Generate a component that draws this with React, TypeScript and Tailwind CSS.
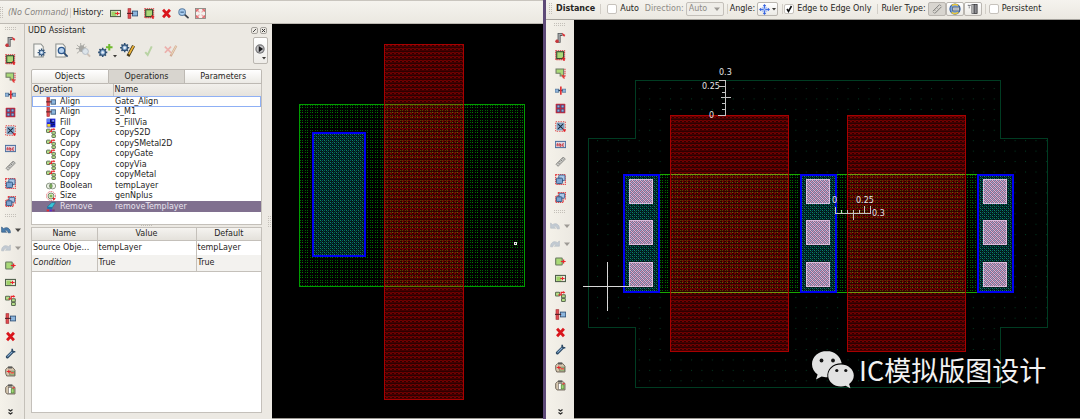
import React, { useState } from 'react';

type IconProps = { className?: string };

function Svg({ className = 'size-[11px]', children }: { className?: string; children: React.ReactNode }) {
  return (
    <svg viewBox="0 0 16 16" className={`shrink-0 ${className}`} fill="none" aria-hidden="true">
      {children}
    </svg>
  );
}

const PathIcon = ({ className }: IconProps) => (
  <Svg className={className}>
    <path d="M2 13.500h4V3.500h5" stroke="#55585a" strokeWidth="4.400" />
    <path d="M3 13.500h3V3.500h4" stroke="#a9adb0" strokeWidth="2" />
    <circle cx="3" cy="13.400" r="2.600" fill="#c8373c" />
    <path d="M10 1l5 3.500-1.500 2.500-2-1.500z" fill="#e03438" />
  </Svg>
);
const RectIcon = ({ className }: IconProps) => (
  <Svg className={className}>
    <rect x="1" y="1" width="13" height="13" stroke="#d8363a" strokeWidth="1.500" strokeDasharray="2 1" />
    <rect x="2.500" y="2.500" width="10" height="10" fill="#a9d977" stroke="#33452a" strokeWidth="1.600" />
    <path d="M10 10l5.500 2-2 1 1 2.500-2 .5z" fill="#e31e24" />
  </Svg>
);
const PolygonIcon = ({ className }: IconProps) => (
  <Svg className={className}>
    <path d="M1.500 1.500h11v10h-5v-4h-6z" fill="#a9d977" stroke="#6d7a63" strokeWidth="1.500" />
    <path d="M14.500 1v12" stroke="#d8363a" strokeWidth="1.500" strokeDasharray="2 1" />
    <path d="M9 9l6.500 3-2 1 1 2.500-3-.5z" fill="#e33a3a" />
  </Svg>
);
const CutIcon = ({ className }: IconProps) => (
  <Svg className={className}>
    <rect x="0" y="6" width="5.500" height="4.500" fill="#8fb6dc" stroke="#4a6d92" />
    <rect x="10.500" y="6" width="5.500" height="4.500" fill="#8fb6dc" stroke="#4a6d92" />
    <path d="M5 8h6" stroke="#233a55" strokeWidth="2" />
    <path d="M8.500 2v12" stroke="#e12f34" strokeWidth="2.400" />
  </Svg>
);
const ArrayIcon = ({ className }: IconProps) => (
  <Svg className={className}>
    <rect x="1" y="1" width="14" height="14" rx="1" fill="#c9283a" />
    {[3, 9].map((y) => [3, 9].map((x) => <rect key={`${x}-${y}`} x={x} y={y} width="4" height="4" fill="#8fb0dc" stroke="#444b80" />))}
  </Svg>
);
const InstanceIcon = ({ className }: IconProps) => (
  <Svg className={className}>
    <rect x="1" y="1" width="14" height="14" stroke="#e04a4e" strokeWidth="1.400" strokeDasharray="2 1.500" />
    <rect x="3" y="3" width="10" height="10" fill="#8fb2d6" stroke="#56779b" />
    <path d="M4.500 4.500l7 7M11.500 4.500l-7 7" stroke="#1c2b3c" strokeWidth="1.600" />
    <path d="M11 11l5 2-3 3z" fill="#e31e24" />
  </Svg>
);
const LabelIcon = ({ className }: IconProps) => (
  <Svg className={className}>
    <rect x=".5" y="3.500" width="15" height="9" fill="#dcd7e2" stroke="#4b6f9e" strokeWidth="1.500" />
    <path d="M3 10.500V7h1.500v3.500M7 6v4.500h1.800V8H7M13 7h-1.800v3.500H13" stroke="#c92a2f" strokeWidth="1.300" />
  </Svg>
);
const RulerIcon = ({ className }: IconProps) => (
  <Svg className={className}>
    <path d="M1.500 12L12 1.500 15 4.500 4.500 15z" fill="#c9c9c6" stroke="#7d7d7a" strokeWidth="1.200" />
    <path d="M4.500 9.500l2 2M6.500 7.500l1.500 1.500M8.500 5.500l2 2M10.500 3.500l1.500 1.500" stroke="#5a5a58" />
  </Svg>
);
const GroupIcon = ({ className }: IconProps) => (
  <Svg className={className}>
    <rect x="1" y="1" width="14" height="14" stroke="#e2444a" strokeWidth="1.700" strokeDasharray="2 1" />
    <rect x="5.500" y="1.500" width="9" height="8" rx="1.500" fill="#a9c7e8" stroke="#3f6695" strokeWidth="1.400" />
    <rect x="2" y="6" width="9" height="8" rx="1.500" fill="#7ba4d2" stroke="#31547f" strokeWidth="1.400" />
  </Svg>
);
const UngroupIcon = ({ className }: IconProps) => (
  <Svg className={className}>
    <path d="M5 1h10v9h-3v5H1V6h4z" stroke="#e2444a" strokeWidth="1.900" strokeDasharray="2 1" />
    <rect x="6" y="2" width="8" height="7" rx="1" fill="#a9c7e8" stroke="#3f6695" strokeWidth="1.400" />
    <rect x="2" y="7" width="8" height="7" rx="1" fill="#7ba4d2" stroke="#31547f" strokeWidth="1.400" />
  </Svg>
);
const undoPath = 'M1 3v8.500h8L6.200 9C8 7.500 10.500 8 11.500 12.500h3.500C15.500 5.500 9 2 4 6z';
const UndoIcon = ({ className }: IconProps) => (
  <Svg className={className}>
    <path d={undoPath} fill="#4c7fae" stroke="#284e77" />
  </Svg>
);
const UndoOffIcon = ({ className }: IconProps) => (
  <Svg className={className}>
    <path d={undoPath} fill="#c3cbd3" stroke="#b2bac2" />
  </Svg>
);
const RedoIcon = ({ className }: IconProps) => (
  <Svg className={className}>
    <path d={undoPath} transform="translate(16 0) scale(-1 1)" fill="#c3cbd3" stroke="#b2bac2" />
  </Svg>
);
const MoveIcon = ({ className }: IconProps) => (
  <Svg className={className}>
    <rect x="1" y="3" width="9.500" height="10" rx="1" fill="#a9d977" stroke="#66775d" strokeWidth="1.600" />
    <path d="M8.500 8H15.500M12.500 5v6" stroke="#e9262c" strokeWidth="1.800" />
  </Svg>
);
const StretchIcon = ({ className }: IconProps) => (
  <Svg className={className}>
    <rect x=".8" y="3.500" width="14.400" height="9" fill="#eef2e8" stroke="#4a5a45" strokeWidth="1.500" />
    <rect x="2" y="5" width="7.500" height="6.500" fill="#9ed067" />
    <path d="M7.500 8H14M11 5.500v5" stroke="#e9262c" strokeWidth="1.600" />
  </Svg>
);
const CopyIcon = ({ className }: IconProps) => (
  <Svg className={className}>
    <rect x=".8" y="1.800" width="6" height="5.400" rx="1" fill="#b5de86" stroke="#5c6c52" strokeWidth="1.500" />
    <rect x="9.500" y="5.500" width="5.500" height="4.500" rx="1" fill="#b5de86" stroke="#5c6c52" strokeWidth="1.500" />
    <rect x="9.500" y="10.800" width="5.500" height="4.400" rx="1" fill="#b5de86" stroke="#5c6c52" strokeWidth="1.500" />
    <path d="M5 5.500h4V2h4" stroke="#e9262c" strokeWidth="1.800" />
    <path d="M12 0l3 2-3 2z" fill="#e9262c" />
  </Svg>
);
const AlignIcon = ({ className }: IconProps) => (
  <Svg className={className}>
    <rect x="1.500" y="1" width="4" height="14" fill="#e24a4f" stroke="#a32f34" />
    <rect x="8" y="4.500" width="7.500" height="7" fill="#8db7de" stroke="#33547a" strokeWidth="1.300" />
    <path d="M0 7.800h9" stroke="#4a1a22" strokeWidth="1.500" />
  </Svg>
);
const DeleteIcon = ({ className }: IconProps) => (
  <Svg className={className}>
    <path d="M3 2.500l10 11M13 2.500l-10 11" stroke="#d9161c" strokeWidth="4" />
  </Svg>
);
const WrenchIcon = ({ className }: IconProps) => (
  <Svg className={className}>
    <path d="M3.500 13L11 5.500" stroke="#2d4a66" strokeWidth="4.400" strokeLinecap="round" />
    <path d="M10.500 1v4.500h4.500" stroke="#2d4a66" strokeWidth="2.400" />
    <path d="M3.500 12.500l7-7" stroke="#8db4d8" strokeWidth="1.500" />
  </Svg>
);
const PasteIcon = ({ className }: IconProps) => (
  <Svg className={className}>
    <path d="M4 2h7l3.500 4v8.500H2.500L1 11V5z" fill="#d6c7ae" stroke="#6e655a" strokeWidth="1.400" />
    <rect x="4.500" y=".6" width="6" height="3" fill="#5a5a58" />
    <rect x="7" y="7.500" width="7" height="5.500" fill="#c5e7a0" stroke="#55664a" />
    <path d="M2.500 8h6M5.500 5.500v5M8 10h5" stroke="#e9262c" strokeWidth="1.500" />
  </Svg>
);
const ClipboardIcon = ({ className }: IconProps) => (
  <Svg className={className}>
    <path d="M4 2h7l3.500 3v9.500H3L1 12V5z" fill="#d6c7ae" stroke="#6e655a" strokeWidth="1.400" />
    <rect x="4.500" y=".6" width="6" height="3" fill="#5a5a58" />
    <rect x="5" y="5" width="5" height="9" fill="#fff" stroke="#77706a" />
    <rect x="9" y="7" width="4" height="6" fill="#a5d878" stroke="#4c8a35" />
    <path d="M11 6l3-1" stroke="#e9262c" strokeWidth="1.600" />
  </Svg>
);
const ZoomIcon = ({ className }: IconProps) => (
  <Svg className={className}>
    <path d="M9 9l5.500 5" stroke="#3b4148" strokeWidth="2.600" strokeLinecap="round" />
    <circle cx="6" cy="6" r="4.800" fill="#a9cdee" stroke="#5f80a4" strokeWidth="1.500" />
    <path d="M3.500 6h5" stroke="#2f5580" strokeWidth="1.500" />
  </Svg>
);
const FitIcon = ({ className }: IconProps) => (
  <Svg className={className}>
    <rect x=".7" y=".7" width="14.600" height="14.600" fill="#f3f1ed" stroke="#8a8680" strokeWidth="1.300" />
    <path d="M3 3l3.500 3.500M13 3L9.500 6.500M3 13l3.500-3.500M13 13L9.500 9.500" stroke="#eda3a5" strokeWidth="1.500" />
    <path d="M2.500 5.500v-3h3M10.500 2.500h3v3M2.500 10.500v3h3M10.500 13.500h3v-3" stroke="#e0484d" strokeWidth="1.500" />
  </Svg>
);
const FillIcon = ({ className }: IconProps) => (
  <Svg className={className}>
    <rect x="1" y="1" width="14" height="14" fill="#1c22d8" />
    <rect x="1.500" y="1.500" width="5.500" height="5.500" fill="#5b7cf0" />
    <rect x="2" y="9.500" width="5" height="4.500" fill="#f0d52c" />
    <rect x="10" y="3" width="3" height="3" fill="#8e9ae0" />
    <path d="M7.500 2v5h6M9.500 9v5M11 10h3" stroke="#0b0d3a" strokeWidth="1.500" />
  </Svg>
);
const BooleanIcon = ({ className }: IconProps) => (
  <Svg className={className}>
    <ellipse cx="5.500" cy="8" rx="5" ry="4.600" fill="#e7eee0" stroke="#7a8573" strokeWidth="1.300" />
    <ellipse cx="10.500" cy="8" rx="5" ry="4.600" fill="#e7eee0" fillOpacity=".6" stroke="#7a8573" strokeWidth="1.300" />
    <path d="M8 4.500c-2 2-2 5 0 7 2-2 2-5 0-7z" fill="#8cc75c" stroke="#4f7d3b" />
  </Svg>
);
const SizeIcon = ({ className }: IconProps) => (
  <Svg className={className}>
    <circle cx="8" cy="8" r="7.200" stroke="#e14a50" strokeWidth="1.300" strokeDasharray="2 1" />
    <circle cx="8" cy="8" r="4.800" fill="#d7e9c4" stroke="#62715a" strokeWidth="1.300" />
    <circle cx="8" cy="8" r="2.200" fill="#7fbb50" />
    <path d="M10.500 10.500l5 1.500-3.500 3.500z" fill="#e31e24" />
  </Svg>
);
const EraserIcon = ({ className }: IconProps) => (
  <Svg className={className}>
    <path d="M2 8L9 1h6l-5 8z" fill="#39c4d6" stroke="#1b6a8c" />
    <path d="M2 8h8v3.500H2z" fill="#2372a8" />
    <path d="M1 13.500h4" stroke="#e12d34" strokeWidth="3" />
    <path d="M5.500 13.500h4" stroke="#5a2fc8" strokeWidth="3" />
    <path d="M10 13.500h4" stroke="#7a3b76" strokeWidth="3" />
  </Svg>
);

const gearPath = 'M8 1.500v13M1.500 8h13M3.400 3.400l9.200 9.200M12.600 3.400l-9.200 9.200';
function Gear({ x, y, s }: { x: number; y: number; s: number }) {
  return (
    <g transform={`translate(${x} ${y}) scale(${s})`}>
      <path d={gearPath} stroke="#2f5074" strokeWidth="2.200" />
      <circle cx="8" cy="8" r="4" fill="#8fb2d8" stroke="#2f5074" strokeWidth="1.500" />
      <circle cx="8" cy="8" r="1.700" fill="#eef3f8" />
    </g>
  );
}
const PageShape = () => <path d="M2 1h7.500L12 4v11H2z" fill="#f6f6f3" stroke="#8b8f8c" strokeWidth="1.100" />;
const DocGearIcon = () => (
  <Svg className="size-[15px]">
    <PageShape />
    <Gear x={5} y={5} s={0.65} />
  </Svg>
);
const DocFindIcon = () => (
  <Svg className="size-[15px]">
    <PageShape />
    <path d="M10.500 10.500l4 4" stroke="#2c4a70" strokeWidth="1.800" />
    <circle cx="8" cy="8" r="3.400" fill="#b6d1ee" stroke="#2e588c" strokeWidth="1.400" />
  </Svg>
);
const BugIcon = () => (
  <Svg className="size-[15px]">
    <path d="M1 2l3 3M9 1L7 4M0 6h4M1 11l3-2.500M11 4L8 5.500M5 0v3" stroke="#a7a7a3" />
    <ellipse cx="6" cy="6" rx="3" ry="3.500" fill="#a7a7a3" />
    <path d="M12 11.500l3 3" stroke="#cfc3b8" strokeWidth="2" />
    <circle cx="10" cy="9" r="3.200" fill="#dce4ea" stroke="#b4bcc4" />
  </Svg>
);
const AddGearIcon = () => (
  <Svg className="size-[15px]">
    <Gear x={-1} y={4} s={0.75} />
    <path d="M12 1v7M8.500 4.500h7" stroke="#6fb92c" strokeWidth="2.200" />
  </Svg>
);
const EditGearIcon = () => (
  <Svg className="size-[15px]">
    <Gear x={-1} y={-1} s={0.75} />
    <path d="M14.500 3L8.500 14" stroke="#453818" strokeWidth="3.400" />
    <path d="M14.500 3L9.500 12" stroke="#eeb43a" strokeWidth="1.800" />
  </Svg>
);
const CheckIcon = () => (
  <Svg className="size-[13px]">
    <path d="M4 10l3 3.500L12 3" stroke="#b9d3a4" strokeWidth="2.400" />
  </Svg>
);
const CancelEditIcon = () => (
  <Svg className="size-[14px]">
    <path d="M1 3l7 7M8 3l-7 7" stroke="#ecb0ac" strokeWidth="2" />
    <path d="M14 2L7.500 14" stroke="#d3ab94" strokeWidth="2.600" />
    <path d="M14 2L8.500 12" stroke="#efe0c0" strokeWidth="1" />
  </Svg>
);
const PlayIcon = () => (
  <Svg className="size-[10px]">
    <circle cx="8" cy="8" r="7.500" fill="#77777a" />
    <circle cx="8" cy="8" r="5.500" fill="#c4c4c6" />
    <path d="M6 3l7 5-7 5z" fill="#17171a" />
  </Svg>
);
const SnapIcon = () => (
  <Svg className="size-[11px]">
    <path d="M8 2v12M2 8h12" stroke="#3f6ee6" strokeWidth="2.200" />
    <path d="M4.500 4.500l7 7M11.500 4.500l-7 7" stroke="#a9c0f6" strokeWidth="1.500" />
    <path d="M8 0l2.500 3h-5zM8 16l2.500-3h-5zM0 8l3-2.500v5zM16 8l-3-2.500v5z" fill="#3560dc" />
  </Svg>
);
const LineRulerIcon = () => (
  <Svg className="size-[12px]">
    <path d="M2.500 11L11.500 2M5 14L14 5" stroke="#7b7b78" strokeWidth="1.300" />
    <path d="M3 12l1.500 1.500M12 2.500L13.500 4M5 9.500l1 1M8 6.500l1 1" stroke="#7b7b78" />
  </Svg>
);
const GlobeRulerIcon = () => (
  <Svg className="size-[12px]">
    <circle cx="8" cy="8" r="6.800" fill="#7ba5dc" stroke="#335f9e" strokeWidth="1.400" />
    <path d="M4 3.500c2-2 6-2 8 0M3.500 12.500c3 2.500 6 2 9 0" stroke="#e9c73d" strokeWidth="2.200" />
    <rect x="5" y="5.500" width="9" height="5" fill="#eef0f2" stroke="#3c4c60" />
    <path d="M6 8h7" stroke="#54606e" />
  </Svg>
);
const PanelRulerIcon = () => (
  <Svg className="size-[12px]">
    <path d="M1 3h4M3 3v4" stroke="#66666a" strokeWidth="1.400" strokeDasharray="1.500 1" />
    <rect x="6.500" y="2" width="3" height="12" fill="#cfcfcf" stroke="#57575a" />
    <rect x="9.500" y="2" width="4" height="12" fill="#8a8a8e" stroke="#333336" />
  </Svg>
);

function Caret({ muted = false }: { muted?: boolean }) {
  return (
    <svg viewBox="0 0 6 4" className="h-1 w-1.5 shrink-0" aria-hidden="true">
      <path d="M0 .5h6L3 4z" fill={muted ? '#9d9a95' : '#4a4845'} />
    </svg>
  );
}

function SmallCaret() {
  return (
    <svg viewBox="0 0 4 3" className="h-[3px] w-1 shrink-0" aria-hidden="true">
      <path d="M0 0h4L2 2.500z" fill="#3c3a37" />
    </svg>
  );
}

function GripH({ className = '' }: IconProps) {
  return (
    <svg viewBox="0 0 12 4" className={`h-1 w-3 shrink-0 ${className}`} aria-hidden="true">
      {[0, 2, 4, 6, 8, 10].map((x) => (
        <path key={x} d={`M${x} .5h1M${x} 2.500h1`} stroke="#c4c0b9" />
      ))}
    </svg>
  );
}

function GripV({ className = '' }: IconProps) {
  return (
    <svg viewBox="0 0 4 12" className={`h-3 w-1 shrink-0 ${className}`} aria-hidden="true">
      {[0, 2, 4, 6, 8, 10].map((y) => (
        <path key={y} d={`M0 ${y + 0.5}h1M2 ${y + 0.5}h1`} stroke="#c4c0b9" />
      ))}
    </svg>
  );
}

type IconType = (p: IconProps) => React.ReactElement;

const createTools: [string, IconType][] = [
  ['Create path', PathIcon],
  ['Create rectangle', RectIcon],
  ['Create polygon', PolygonIcon],
  ['Cut', CutIcon],
  ['Create array', ArrayIcon],
  ['Create instance', InstanceIcon],
  ['Create label', LabelIcon],
  ['Ruler', RulerIcon],
  ['Group', GroupIcon],
  ['Ungroup', UngroupIcon],
];
const editTools: [string, IconType][] = [
  ['Move', MoveIcon],
  ['Stretch', StretchIcon],
  ['Copy', CopyIcon],
  ['Align', AlignIcon],
  ['Delete', DeleteIcon],
  ['Properties', WrenchIcon],
  ['Paste', PasteIcon],
  ['Clipboard', ClipboardIcon],
];

function ToolButton({ name, icon: Icon }: { name: string; icon: IconType }) {
  return (
    <button type="button" aria-label={name} className="flex w-full flex-1 items-center justify-center">
      <Icon />
    </button>
  );
}

function ToolColumn({ undo }: { undo: boolean }) {
  return (
    <aside className="flex h-full flex-col items-center bg-linear-to-r from-[#f5f2ea] to-[#ebe8e1]">
      <GripH className="mt-[3px] mb-[2px]" />
      <div className="flex h-[177px] w-full flex-col">
        {createTools.map(([name, icon]) => (
          <ToolButton key={name} name={name} icon={icon} />
        ))}
      </div>
      <GripH className="mt-1 mb-[3px]" />
      <div className="flex h-[177px] w-full flex-col">
        <button type="button" aria-label="Undo" className="flex flex-1 items-center justify-center gap-1">
          {undo ? <UndoIcon className="size-[10px]" /> : <UndoOffIcon className="size-[10px]" />}
          <Caret muted={!undo} />
        </button>
        <button type="button" aria-label="Redo" className="flex flex-1 items-center justify-center gap-1">
          <RedoIcon className="size-[10px]" />
          <Caret muted />
        </button>
        {editTools.map(([name, icon]) => (
          <ToolButton key={name} name={name} icon={icon} />
        ))}
      </div>
      <button type="button" aria-label="More tools" className="mt-auto mb-1">
        <svg viewBox="0 0 5 6" className="h-1.5 w-[5px]" fill="none" aria-hidden="true">
          <path d="M.5 .500L2.500 2 4.500 .5M.5 3.500L2.500 5 4.500 3.500" stroke="#222" strokeWidth="1.200" />
        </svg>
      </button>
    </aside>
  );
}

const operations: [string, string, IconType][] = [
  ['Align', 'Gate_Align', AlignIcon],
  ['Align', 'S_M1', AlignIcon],
  ['Fill', 'S_FillVia', FillIcon],
  ['Copy', 'copyS2D', CopyIcon],
  ['Copy', 'copySMetal2D', CopyIcon],
  ['Copy', 'copyGate', CopyIcon],
  ['Copy', 'copyVia', CopyIcon],
  ['Copy', 'copyMetal', CopyIcon],
  ['Boolean', 'tempLayer', BooleanIcon],
  ['Size', 'genNplus', SizeIcon],
  ['Remove', 'removeTemplayer', EraserIcon],
];

const tabs = ['Objects', 'Operations', 'Parameters'];

function Assistant() {
  const [tab, setTab] = useState('Operations');
  return (
    <section className="flex min-h-0 flex-col bg-[#ece9e3] pb-[6px] pl-[6px]">
      <header className="flex h-[13px] items-center gap-[2px] pr-[2px]">
        <h2 className="-ml-1 flex-1 pl-px">UDD Assistant</h2>
        <button type="button" aria-label="Float" className="flex size-[7px] items-center justify-center rounded-xs border border-[#a5a29d]">
          <svg viewBox="0 0 5 5" className="size-[5px]" aria-hidden="true">
            <path d="M1 4L4 1" stroke="#444" />
          </svg>
        </button>
        <button type="button" aria-label="Close" className="flex size-[7px] items-center justify-center rounded-xs border border-[#a5a29d]">
          <svg viewBox="0 0 5 5" className="size-[5px]" aria-hidden="true">
            <path d="M1 1l3 3M4 1L1 4" stroke="#333" />
          </svg>
        </button>
      </header>
      <div className="flex h-[27px] items-center gap-[7px] pr-px pl-px">
        <button type="button" aria-label="New operation"><DocGearIcon /></button>
        <button type="button" aria-label="Inspect"><DocFindIcon /></button>
        <button type="button" aria-label="Debug"><BugIcon /></button>
        <button type="button" aria-label="Add operation" className="flex w-[15px] items-end">
          <AddGearIcon />
          <SmallCaret />
        </button>
        <button type="button" aria-label="Edit operation"><EditGearIcon /></button>
        <button type="button" aria-label="Apply"><CheckIcon /></button>
        <button type="button" aria-label="Discard" className="ml-[2px]"><CancelEditIcon /></button>
        <button type="button" aria-label="Run" className="ml-auto flex h-[27px] w-[15px] flex-col items-center justify-end gap-[3px] rounded-xs border border-[#bab6b0] bg-linear-to-b from-white to-[#eeece8] pr-px pb-[3px]">
          <PlayIcon />
          <span className="self-end"><SmallCaret /></span>
        </button>
      </div>
      <div className="mt-[5px] mr-[7px] flex h-[15px]" role="tablist">
        {tabs.map((t) => (
          <button
            key={t}
            type="button"
            role="tab"
            aria-selected={t === tab}
            onClick={() => setTab(t)}
            className={`flex-1 border border-l-0 border-[#bdb9b3] first:rounded-tl-xs first:border-l last:rounded-tr-xs ${
              t === tab ? 'bg-[#d8d5cf]' : 'bg-linear-to-b from-white to-[#eceae5]'
            }`}
          >
            {t}
          </button>
        ))}
      </div>
      <div className="mr-[7px] h-[141px] border border-t-0 border-[#c4c0ba] bg-white">
        <table className="h-[128px] w-full table-fixed border-collapse">
          <thead className="bg-linear-to-b from-[#f2f0ec] to-[#e6e3dd]">
            <tr className="h-3">
              <th className="w-[81px] border-r border-b border-[#c4c0ba] pl-px text-left font-normal">Operation</th>
              <th className="border-b border-[#c4c0ba] pl-px text-left font-normal">Name</th>
            </tr>
          </thead>
          <tbody>
            {operations.map(([op, name, Icon], i) => (
              <tr
                key={name}
                className={
                  i === 0
                    ? 'outline-1 -outline-offset-1 outline-[#8fb0f5]'
                    : i === 10
                      ? 'bg-[#80708f] text-[#e9e4ee]'
                      : ''
                }
              >
                <td className="p-0 pl-[14px]">
                  <span className="flex h-[10px] items-center gap-1">
                    <Icon className="size-[10px]" />
                    {op}
                  </span>
                </td>
                <td className="p-0 pl-[2px]">{name}</td>
              </tr>
            ))}
          </tbody>
        </table>
      </div>
      <div className="mr-[7px] flex h-[2px] justify-center overflow-hidden">
        <GripH />
      </div>
      <div className="mr-[7px] min-h-0 flex-1 border border-[#c4c0ba] bg-white">
        <table className="w-full table-fixed border-collapse">
          <thead className="bg-linear-to-b from-[#f5f3f0] to-[#e4e1db]">
            <tr className="h-3">
              <th className="w-[65px] border-r border-b border-[#c4c0ba] p-0 font-normal">Name</th>
              <th className="border-r border-b border-[#c4c0ba] p-0 font-normal">Value</th>
              <th className="w-[65px] border-b border-[#c4c0ba] p-0 font-normal">Default</th>
            </tr>
          </thead>
          <tbody>
            <tr className="h-[15px]">
              <td className="border-r border-[#c4c0ba] p-0 pl-px">Source Obje...</td>
              <td className="border-r border-[#c4c0ba] p-0 pl-px">tempLayer</td>
              <td className="p-0 pl-px">tempLayer</td>
            </tr>
            <tr className="h-4 bg-[#f3f2ef]">
              <td className="border-r border-b border-[#c4c0ba] p-0 pl-px italic">Condition</td>
              <td className="border-r border-b border-[#c4c0ba] p-0 pl-px">True</td>
              <td className="border-b border-[#c4c0ba] p-0 pl-px">True</td>
            </tr>
          </tbody>
        </table>
      </div>
    </section>
  );
}

function Patterns({ id }: { id: string }) {
  return (
    <defs>
      <pattern id={`${id}-red`} width="4" height="4" patternUnits="userSpaceOnUse">
        <rect width="4" height="4" fill="#2c0000" />
        <path d="M0 .5h4" stroke="#5c0000" />
        <path d="M0 .5h2M2 1.500h2" stroke="#740000" />
        <path d="M0 2.500h4" stroke="#460000" />
      </pattern>
      <pattern id={`${id}-green`} width="5" height="5" patternUnits="userSpaceOnUse">
        <path d="M0 .5h1M2 .5h1M0 2.500h1" stroke="#006400" />
        <path d="M2 2.500h1" stroke="#008400" />
      </pattern>
      <pattern id={`${id}-olive`} width="5" height="5" patternUnits="userSpaceOnUse">
        <path d="M0 .5h1M2 .5h1M0 2.500h1" stroke="#4c4a00" />
        <path d="M2 2.500h1" stroke="#5c6a00" />
      </pattern>
      <pattern id={`${id}-teal`} width="4" height="4" patternUnits="userSpaceOnUse">
        <rect width="4" height="4" fill="#001c18" />
        <path d="M0 .5h1M2 2.500h1" stroke="#0c8a64" />
        <path d="M2 .5h1M0 2.500h1" stroke="#085070" />
        <path d="M1 1.500h1M3 3.500h1" stroke="#063c3c" />
      </pattern>
      <pattern id={`${id}-via`} width="4" height="4" patternUnits="userSpaceOnUse">
        <rect width="4" height="4" fill="#8c6c8c" />
        <path d="M0 .5h1M2 2.500h1M1 1.500h1M3 3.500h1" stroke="#d4b4d8" />
        <path d="M2 .5h1M0 2.500h1" stroke="#90a4cc" />
        <path d="M3 1.500h1M1 3.500h1" stroke="#c49cc0" />
      </pattern>
      <pattern id={`${id}-grid`} x="597" y="88" width="10.440" height="10.440" patternUnits="userSpaceOnUse">
        <rect width="1" height="1" fill="#003c22" />
      </pattern>
    </defs>
  );
}

function SourceLayout() {
  return (
    <svg className="block size-full bg-black" role="img" aria-label="Source layout">
      <Patterns id="src" />
      <g transform="translate(-272 -24)" shapeRendering="crispEdges">
        <rect x="299.500" y="104.500" width="225" height="182" fill="url(#src-green)" stroke="#009c00" />
        <rect x="384.500" y="44.500" width="79" height="355" fill="url(#src-red)" stroke="#a80000" />
        <rect x="385" y="105" width="78" height="181" fill="url(#src-olive)" />
        <path d="M385 104.500h78M385 286.500h78" stroke="#5a7400" />
        <rect x="313" y="133" width="52" height="123" fill="url(#src-teal)" stroke="#0000f4" strokeWidth="2" />
        <rect x="514.500" y="242.500" width="2" height="2" stroke="#e8e8e8" fill="#333" />
      </g>
    </svg>
  );
}

const outline = 'M635.500 80.500H1000.500V138.500H1047.500V327.500H1000.500V387.500H635.500V327.500H588.500V138.500H635.500Z';
const gates = [670, 847];
const contacts = [622, 799, 976];

function ResultLayout() {
  return (
    <svg className="block size-full bg-black" role="img" aria-label="Result layout">
      <Patterns id="res" />
      <g transform="translate(-574 -20)">
        <g shapeRendering="crispEdges">
          <path d={outline} fill="url(#res-grid)" stroke="#003c22" />
          <rect x="623.500" y="174.500" width="389" height="118" fill="url(#res-green)" stroke="#18a800" />
          {gates.map((x) => (
            <g key={x}>
              <rect x={x + 0.5} y="115.500" width="118" height="236" fill="url(#res-red)" stroke="#a80000" />
              <rect x={x + 1} y="175" width="117" height="117" fill="url(#res-olive)" />
              <path d={`M${x + 1} 174.500h117M${x + 1} 292.500h117`} stroke="#70980c" />
            </g>
          ))}
          {contacts.map((x) => (
            <g key={x}>
              <rect x={x + 2} y="175" width="35" height="117" fill="url(#res-teal)" stroke="#0000f4" strokeWidth="2" />
              {[180, 221, 263].map((y) => (
                <rect key={y} x={x + 7.5} y={y - 0.5} width="23" height="24" fill="url(#res-via)" stroke="#d8bcdc" />
              ))}
            </g>
          ))}
          <path
            d="M725.500 80V116M719 80.500h6M719 86.500h6M722 92.500h3M721 97.500h10M722 103.500h3M722 109.500h3M718 115.500h7"
            stroke="#c4c4c4"
          />
          <path
            d="M835 213.500h36M835.500 207v6M841.500 210v3M847.500 210v3M853.500 210v10M859.500 210v3M864.500 206v7M870.500 206v7"
            stroke="#c4c4c4"
          />
          <path d="M607.500 262v49M583 286.500h49" stroke="#d8d8d8" />
        </g>
        <g fill="#e4e4e4" fontSize="8">
          <text x="719" y="75">0.3</text>
          <text x="702" y="89">0.25</text>
          <text x="709" y="118">0</text>
          <text x="832" y="203">0</text>
          <text x="856" y="203">0.25</text>
          <text x="872" y="216">0.3</text>
        </g>
        <g fill="#e2e2e2">
          <path d="M827 351c-8.500 0-15 5.800-15 13.200 0 4.200 2.200 7.800 5.600 10.200l-1.600 5 5.600-3c1.800.5 3.400.8 5.800.8-.9-8 5.500-14.200 14.300-14-1.400-7-7.300-12.200-14.700-12.200z" />
          <path d="M841 364.500c-7.300 0-12.800 4.900-12.800 10.900 0 6.200 5.600 11 12.800 11 1.600 0 3.100-.3 4.600-.7l4.800 2.500-1.300-4.200c2.900-2.100 4.700-5.200 4.700-8.600 0-6-5.800-10.900-12.800-10.900z" />
          <g fill="#141414">
            <circle cx="821.500" cy="360.500" r="1.900" />
            <circle cx="833" cy="360.500" r="1.900" />
            <circle cx="836.800" cy="370.500" r="1.600" />
            <circle cx="845.800" cy="370.500" r="1.600" />
          </g>
        </g>
        <text x="859" y="381" fontSize="27" fill="#f2f2f2" className="font-['Noto_Sans_CJK_SC',sans-serif]">
          IC模拟版图设计
        </text>
      </g>
    </svg>
  );
}

function CheckField({ id, label, checked = false }: { id: string; label: string; checked?: boolean }) {
  return (
    <div className="flex items-center gap-[3px]">
      <span className="grid">
        <input
          id={id}
          type="checkbox"
          defaultChecked={checked}
          className="peer col-start-1 row-start-1 size-[10px] appearance-none rounded-xs border border-[#c6c2bc] bg-white"
        />
        <svg viewBox="0 0 10 10" className="pointer-events-none invisible col-start-1 row-start-1 size-[10px] peer-checked:visible" fill="none" aria-hidden="true">
          <path d="M3 5l1.500 2.500L7.500 2" stroke="#111" strokeWidth="1.600" />
        </svg>
      </span>
      <label htmlFor={id}>{label}</label>
    </div>
  );
}

const Divider = () => <span className="h-2.5 w-px shrink-0 bg-[#d2cec7]" />;

const history: [string, IconType][] = [
  ['Stretch', StretchIcon],
  ['Align', AlignIcon],
  ['Rectangle', RectIcon],
  ['Delete', DeleteIcon],
  ['Zoom out', ZoomIcon],
  ['Fit', FitIcon],
];

export default function App() {
  const [ruler, setRuler] = useState(0);
  return (
    <main className="grid h-screen min-h-[419px] grid-cols-[543fr_537fr] overflow-hidden bg-[#ece9e3] font-['DejaVu_Sans',sans-serif] text-[8px] leading-[10px] whitespace-nowrap text-[#262523]">
      <section className="flex min-w-0 flex-col border-t border-[#c9c5be]">
        <div className="flex h-[23px] shrink-0 items-center border-b border-[#bdb9b2] bg-linear-to-b from-[#f5f3ee] to-[#ebe8e1] pt-[2px]">
          <GripV />
          <span className="ml-1 w-[60px] overflow-hidden text-[#85827d] italic">(No Command)</span>
          <span className="mx-[2px] flex"><Divider /></span>
          <span className="mr-[3px]">History:</span>
          {history.map(([name, Icon]) => (
            <button key={name} type="button" aria-label={name} className="flex w-[17px] justify-center">
              <Icon />
            </button>
          ))}
        </div>
        <div className="grid min-h-0 flex-1 grid-cols-[25px_244px_1fr]">
          <div className="border-r border-[#c4c0b9] pr-[3px]"><ToolColumn undo /></div>
          <Assistant />
          <div className="flex min-w-0">
            <div className="flex w-[3px] shrink-0 items-center justify-end">
              <GripV />
            </div>
            <div className="min-w-0 flex-1 border-b border-[#9a9791]">
              <SourceLayout />
            </div>
          </div>
        </div>
      </section>
      <section className="flex min-w-0 flex-col border-l-[3px] border-[#5e4a78]">
        <div className="flex h-5 shrink-0 items-center border-b border-[#a5a29c] bg-linear-to-b from-[#f5f3ee] to-[#ebe8e1] pb-px pl-[3px]">
          <GripV className="mr-[3px]" />
          <strong>Distance</strong>
          <span className="mr-1.5 ml-[5px] flex"><Divider /></span>
          <CheckField id="auto" label="Auto" />
          <label htmlFor="direction" className="mr-[2px] ml-1.5 text-[#8e8b86]">Direction:</label>
          <span className="grid items-center">
            <select id="direction" disabled className="col-start-1 row-start-1 h-[14px] w-[38px] appearance-none rounded-xs border border-[#c4c0ba] bg-[#efede8] pl-[2px] text-[#8e8b86]">
              <option>Auto</option>
            </select>
            <span className="pointer-events-none col-start-1 row-start-1 mr-1 justify-self-end"><Caret muted /></span>
          </span>
          <span className="mr-[2px] ml-[3px] flex"><Divider /></span>
          <span className="mr-[2px]">Angle:</span>
          <button type="button" aria-label="Angle mode" className="flex h-[14px] w-[21px] items-center justify-center gap-[2px] rounded-xs border border-[#bab6b0] bg-linear-to-b from-white to-[#eceae5]">
            <SnapIcon />
            <SmallCaret />
          </button>
          <span className="mr-px ml-1 flex"><Divider /></span>
          <CheckField id="edge" label="Edge to Edge Only" checked />
          <span className="mr-[3px] ml-1.5 flex"><Divider /></span>
          <span className="mr-[2px]">Ruler Type:</span>
          {[LineRulerIcon, GlobeRulerIcon, PanelRulerIcon].map((Icon, i) => (
            <button
              key={i}
              type="button"
              aria-label={`Ruler type ${i + 1}`}
              aria-pressed={ruler === i}
              onClick={() => setRuler(i)}
              className={`flex h-[14px] w-[18px] items-center justify-center rounded-xs border border-[#bab6b0] ${
                ruler === i ? 'bg-[#d8d5cf]' : 'bg-linear-to-b from-white to-[#eceae5]'
              }`}
            >
              <Icon />
            </button>
          ))}
          <span className="mr-[3px] ml-[3px] flex"><Divider /></span>
          <CheckField id="persistent" label="Persistent" />
        </div>
        <div className="grid min-h-0 flex-1 grid-cols-[28px_1fr]">
          <ToolColumn undo={false} />
          <div className="min-w-0 border-b border-[#9a9791]">
            <ResultLayout />
          </div>
        </div>
      </section>
    </main>
  );
}
